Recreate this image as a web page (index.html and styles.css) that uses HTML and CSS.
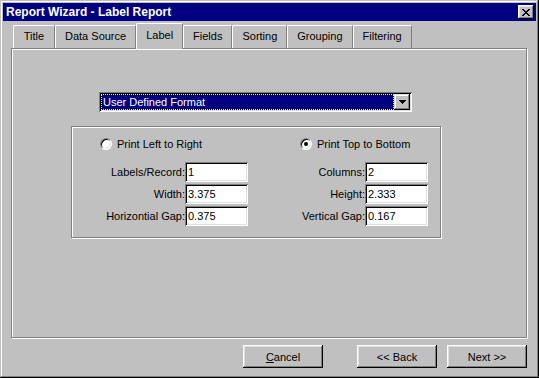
FILE: index.html
```html
<!DOCTYPE html>
<html lang="en">
<head>
  <meta charset="UTF-8">
  <title>Report Wizard - Label Report</title>
  <link rel="stylesheet" href="styles.css">
</head>
<body>

  <div class="window">
    <div class="titlebar">
      <span class="title">Report Wizard - Label Report</span>
      <div class="close-btn">
        <svg width="8" height="7" viewBox="0 0 8 7" shape-rendering="crispEdges">
          <path d="M0 0h2v1H0zM6 0h2v1H6zM1 1h2v1H1zM5 1h2v1H5zM2 2h4v1H2zM3 3h2v1H3zM2 4h4v1H2zM1 5h2v1H1zM5 5h2v1H5zM0 6h2v1H0zM6 6h2v1H6z" fill="#000"/>
        </svg>
      </div>
    </div>

    <div class="tabs">
      <div class="tab">Title</div>
      <div class="tab">Data Source</div>
      <div class="tab active">Label</div>
      <div class="tab">Fields</div>
      <div class="tab">Sorting</div>
      <div class="tab">Grouping</div>
      <div class="tab">Filtering</div>
    </div>

    <div class="panel">
      <div class="combo">
        <div class="combo-value">User Defined Format</div>
        <div class="combo-btn">
          <svg width="7" height="4" viewBox="0 0 7 4" shape-rendering="crispEdges">
            <path d="M0 0h7v1H0zM1 1h5v1H1zM2 2h3v1H2zM3 3h1v1H3z" fill="#000"/>
          </svg>
        </div>
      </div>

      <div class="group">
        <div class="radio radio-left">
          <span class="radio-dot"></span>
          <span>Print Left to Right</span>
        </div>
        <div class="radio radio-right">
          <span class="radio-dot checked"></span>
          <span>Print Top to Bottom</span>
        </div>

        <label class="field-label">Labels/Record:</label>
        <div class="field">1</div>
        <label class="field-label">Columns:</label>
        <div class="field">2</div>

        <label class="field-label">Width:</label>
        <div class="field">3.375</div>
        <label class="field-label">Height:</label>
        <div class="field">2.333</div>

        <label class="field-label">Horizontial Gap:</label>
        <div class="field">0.375</div>
        <label class="field-label">Vertical Gap:</label>
        <div class="field">0.167</div>
      </div>
    </div>

    <div class="actions">
      <button class="btn btn-cancel"><u>C</u>ancel</button>
      <button class="btn">&lt;&lt; Back</button>
      <button class="btn">Next &gt;&gt;</button>
    </div>
  </div>

</body>
</html>
```

FILE: styles.css
```css
body {
  margin: 0;
  background-color: #c0c0c0;
  font-family: "Liberation Sans", Arial, sans-serif;
  font-size: 11px;
  color: #000;
}
.window {
  width: 539px;
  height: 378px;
  box-sizing: border-box;
  padding: 3px;
  background-color: #c0c0c0;
  box-shadow: inset -1px -1px #000, inset 1px 1px #c0c0c0, inset -2px -2px #808080, inset 2px 2px #fff;
}
.titlebar {
  height: 18px;
  display: flex;
  align-items: center;
  justify-content: space-between;
  padding: 0 2px 0 3px;
  background-color: #000080;
  color: #fff;
  font-weight: bold;
  font-size: 12px;
}
.close-btn {
  width: 16px;
  height: 14px;
  box-sizing: border-box;
  display: flex;
  align-items: center;
  justify-content: center;
  background-color: #c0c0c0;
  box-shadow: inset -1px -1px #000, inset 1px 1px #fff, inset -2px -2px #808080, inset 2px 2px #dfdfdf;
}
.tabs {
  display: flex;
  align-items: flex-end;
  height: 25px;
  margin-top: 2px;
  padding-left: 10px;
}
.tab {
  min-width: 42px;
  height: 23px;
  box-sizing: border-box;
  padding: 0 9px;
  line-height: 21px;
  text-align: center;
  border-top: 1px solid #fff;
  border-left: 1px solid #fff;
  border-right: 1px solid #808080;
  border-radius: 2px 2px 0 0;
  background-color: #c0c0c0;
}
.tab.active {
  position: relative;
  top: 1px;
  z-index: 1;
  height: 26px;
  line-height: 23px;
}
.panel {
  width: 516px;
  height: 290px;
  box-sizing: border-box;
  margin-left: 8px;
  border: 1px solid #808080;
  box-shadow: 1px 1px 0 #fff, inset 1px 1px 0 #fff;
  padding: 43px 0 0 87px;
}
.combo {
  display: flex;
  width: 313px;
  height: 20px;
  box-sizing: border-box;
  padding: 2px;
  background-color: #fff;
  box-shadow: inset 1px 1px #808080, inset -1px -1px #fff, inset 2px 2px #000, inset -2px -2px #dfdfdf;
}
.combo-value {
  flex: 1;
  padding-left: 2px;
  line-height: 16px;
  background-color: #000080;
  color: #fff;
  box-shadow: inset 0 0 0 1px #000;
  outline: 1px dotted #ffff00;
  outline-offset: -1px;
}
.combo-btn {
  width: 16px;
  display: flex;
  align-items: center;
  justify-content: center;
  background-color: #c0c0c0;
  box-shadow: inset -1px -1px #000, inset 1px 1px #dfdfdf, inset -2px -2px #808080, inset 2px 2px #fff;
}
.group {
  width: 370px;
  height: 112px;
  box-sizing: border-box;
  margin: 14px 0 0 -28px;
  padding-top: 10px;
  border: 1px solid #808080;
  box-shadow: 1px 1px 0 #fff, inset 1px 1px 0 #fff;
  display: grid;
  grid-template-columns: 113px 63px 117px 63px;
  grid-template-rows: 23px 20px 20px 20px;
  row-gap: 2px;
}
.radio {
  display: flex;
  align-items: center;
  align-self: start;
  height: 13px;
  gap: 5px;
}
.radio-left {
  grid-column: 1 / 3;
  padding-left: 28px;
}
.radio-right {
  grid-column: 3 / 5;
  padding-left: 52px;
}
.radio-dot {
  width: 12px;
  height: 12px;
  box-sizing: border-box;
  border-radius: 50%;
  border: 1px solid;
  border-color: #808080 #fff #fff #808080;
  background-color: #fff;
  box-shadow: inset 1px 1px #000, inset -1px -1px #dfdfdf;
  display: flex;
  align-items: center;
  justify-content: center;
}
.radio-dot.checked::after {
  content: "";
  width: 4px;
  height: 4px;
  border-radius: 50%;
  background-color: #000;
}
.field-label {
  text-align: right;
  line-height: 20px;
  white-space: nowrap;
}
.field {
  height: 20px;
  box-sizing: border-box;
  padding-left: 3px;
  line-height: 20px;
  background-color: #fff;
  box-shadow: inset 1px 1px #808080, inset -1px -1px #fff, inset 2px 2px #000, inset -2px -2px #dfdfdf;
}
.actions {
  display: flex;
  justify-content: flex-end;
  gap: 10px;
  margin-top: 7px;
  padding-right: 9px;
}
.btn {
  width: 80px;
  height: 23px;
  padding: 0;
  border: none;
  font-family: inherit;
  font-size: 11px;
  color: #000;
  background-color: #c0c0c0;
  box-shadow: inset -1px -1px #000, inset 1px 1px #fff, inset -2px -2px #808080, inset 2px 2px #dfdfdf;
}
.btn-cancel {
  margin-right: 24px;
}
```
